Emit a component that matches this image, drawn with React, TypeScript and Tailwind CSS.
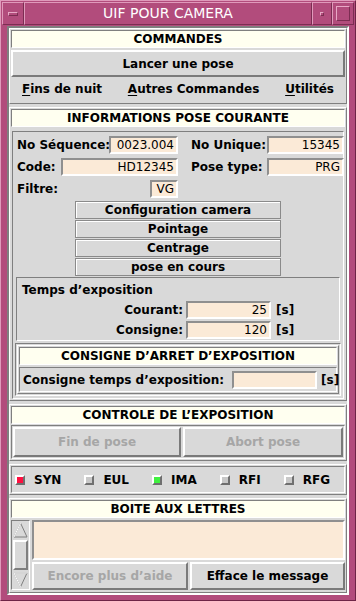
import React from "react";

const raised = "border border-t-white border-l-white border-b-[#7f7f7f] border-r-[#7f7f7f]";
const sunken = "border border-t-[#7f7f7f] border-l-[#7f7f7f] border-b-white border-r-white";

function Header({ children }: { children: React.ReactNode }) {
  return (
    <div className={`h-[18px] shrink-0 bg-[#fffff0] ${sunken} flex items-center justify-center leading-none`}>
      {children}
    </div>
  );
}

function Field({ value, className }: { value: string; className: string }) {
  return (
    <div
      className={`h-[18px] shrink-0 bg-[#fbead7] border-2 border-t-[#8f8f8f] border-l-[#8f8f8f] border-b-white border-r-white flex items-center justify-end pr-[2px] font-normal ${className}`}
    >
      {value}
    </div>
  );
}

function SmallButton({ label }: { label: string }) {
  return (
    <div className="h-[18px] w-[206px] shrink-0 border border-[#8a8a8a] shadow-[inset_1px_1px_0_#fff] flex items-center justify-center">
      {label}
    </div>
  );
}

function BigButton({ label, disabled, className }: { label: string; disabled?: boolean; className: string }) {
  return (
    <div
      className={`border-2 border-t-white border-l-white border-b-[#7a7a7a] border-r-[#7a7a7a] flex items-center justify-center ${disabled ? "text-[#a6a6a6]" : "text-black"} ${className}`}
    >
      {label}
    </div>
  );
}

function Led({ color, label }: { color?: string; label: string }) {
  return (
    <div className="flex items-center gap-[9px]">
      <div
        className={`w-[10px] h-[10px] border-2 border-t-white border-l-white border-b-[#6f6f6f] border-r-[#6f6f6f] ${color ?? "bg-[#c8c8c8]"}`}
      />
      <span>{label}</span>
    </div>
  );
}

export default function App() {
  return (
    <div
      className="w-[356px] h-[601px] bg-[#b24c7c] border border-t-[#e09abb] border-l-[#e09abb] border-b-[#6e2446] border-r-[#6e2446] flex flex-col text-[12px] font-bold text-black whitespace-nowrap"
      style={{ fontFamily: '"DejaVu Sans", "Liberation Sans", sans-serif' }}
    >
      {/* title bar */}
      <div className="h-[23px] mx-[1px] mt-[1px] flex">
        <div className="w-[22px] border border-t-[#e09abb] border-l-[#e09abb] border-b-[#7c2d52] border-r-[#7c2d52] flex items-center justify-center">
          <div className="w-[10px] h-[4px] border border-t-[#e8a8c6] border-l-[#e8a8c6] border-b-[#7c2d52] border-r-[#7c2d52]" />
        </div>
        <div className="flex-1 border border-t-[#e09abb] border-l-[#e09abb] border-b-[#7c2d52] border-r-[#7c2d52] flex items-center justify-center text-white text-[14px] font-normal">
          UIF POUR CAMERA
        </div>
        <div className="w-[20px] border border-t-[#e09abb] border-l-[#e09abb] border-b-[#7c2d52] border-r-[#7c2d52] flex items-center justify-center">
          <div className="w-[4px] h-[4px] border border-t-[#e8a8c6] border-l-[#e8a8c6] border-b-[#7c2d52] border-r-[#7c2d52]" />
        </div>
        <div className="w-[22px] border border-t-[#e09abb] border-l-[#e09abb] border-b-[#7c2d52] border-r-[#7c2d52] flex items-center justify-center">
          <div className="w-[14px] h-[15px] border border-t-[#e8a8c6] border-l-[#e8a8c6] border-b-[#7c2d52] border-r-[#7c2d52]" />
        </div>
      </div>

      {/* client area */}
      <div className="flex-1 min-h-0 mx-[6px] mb-[5px] mt-[1px] bg-[#d9d9d9] border-2 border-t-[#7f7f7f] border-l-[#7f7f7f] border-b-white border-r-white flex flex-col gap-[3px]">
        {/* COMMANDES */}
        <div className={`${raised} h-[76px] shrink-0 flex flex-col p-[1px]`}>
          <Header>COMMANDES</Header>
          <div className="mt-[2px] h-[27px] shrink-0 border-2 border-t-white border-l-white border-b-[#7a7a7a] border-r-[#7a7a7a] flex items-center justify-center">
            Lancer une pose
          </div>
          <div className="flex-1 flex items-center justify-between px-[11px] pb-[2px]">
            <span><span className="underline underline-offset-2">F</span>ins de nuit</span>
            <span><span className="underline underline-offset-2">A</span>utres Commandes</span>
            <span><span className="underline underline-offset-2">U</span>tilités</span>
          </div>
        </div>

        {/* INFORMATIONS */}
        <div className={`${raised} h-[294px] shrink-0 flex flex-col p-[1px]`}>
          <Header>INFORMATIONS POSE COURANTE</Header>
          <div className={`mt-[4px] mx-[1px] flex-1 ${sunken} flex flex-col p-[2px]`}>
            <div className="flex flex-col gap-[4px] pt-[2px] pl-[2px]">
              <div className="flex items-center">
                <span className="w-[92px] shrink-0">No Séquence:</span>
                <Field value="0023.004" className="w-[69px]" />
                <span className="w-[76px] ml-[13px] shrink-0">No Unique:</span>
                <Field value="15345" className="w-[77px]" />
              </div>
              <div className="flex items-center">
                <span className="w-[44px] shrink-0">Code:</span>
                <Field value="HD12345" className="w-[117px]" />
                <span className="w-[76px] ml-[13px] shrink-0">Pose type:</span>
                <Field value="PRG" className="w-[77px]" />
              </div>
              <div className="flex items-center">
                <span className="w-[133px] shrink-0">Filtre:</span>
                <Field value="VG" className="w-[28px]" />
              </div>
            </div>
            <div className="flex flex-col items-center gap-[1px] mt-[3px]">
              <SmallButton label="Configuration camera" />
              <SmallButton label="Pointage" />
              <SmallButton label="Centrage" />
              <SmallButton label="pose en cours" />
            </div>
            <div className={`mt-[1px] mx-[1px] h-[64px] shrink-0 ${sunken} px-[5px] pt-[2px]`}>
              <div className="leading-[20px]">Temps d’exposition</div>
              <div className="flex items-center mt-[1px]">
                <span className="w-[164px] text-right pr-[3px]">Courant:</span>
                <Field value="25" className="w-[85px]" />
                <span className="ml-[5px]">[s]</span>
              </div>
              <div className="flex items-center mt-[2px]">
                <span className="w-[164px] text-right pr-[3px]">Consigne:</span>
                <Field value="120" className="w-[85px]" />
                <span className="ml-[5px]">[s]</span>
              </div>
            </div>
            <div className={`mt-[2px] flex-1 ${sunken} p-[1px] flex flex-col`}>
              <div className={`${raised} flex-1 flex flex-col p-[1px]`}>
                <Header>CONSIGNE D’ARRET D’EXPOSITION</Header>
                <div className={`mt-[2px] flex-1 ${sunken} flex items-center pl-[3px]`}>
                  <span className="w-[209px] shrink-0">Consigne temps d’exposition:</span>
                  <Field value="" className="w-[85px]" />
                  <span className="ml-[4px]">[s]</span>
                </div>
              </div>
            </div>
          </div>
        </div>

        {/* CONTROLE */}
        <div className={`${raised} h-[57px] shrink-0 flex flex-col p-[1px]`}>
          <Header>CONTROLE DE L’EXPOSITION</Header>
          <div className={`mt-[1px] flex-1 ${sunken} flex gap-[2px] p-[1px]`}>
            <BigButton label="Fin de pose" disabled className="w-[168px]" />
            <BigButton label="Abort pose" disabled className="flex-1" />
          </div>
        </div>

        {/* LEDS */}
        <div className={`${raised} h-[31px] shrink-0 p-[1px] flex`}>
          <div className={`${sunken} flex-1 flex items-center justify-between pl-[3px] pr-[14px]`}>
            <Led label="SYN" color="bg-[#ff1040]" />
            <Led label="EUL" />
            <Led label="IMA" color="bg-[#40f040]" />
            <Led label="RFI" />
            <Led label="RFG" />
          </div>
        </div>

        {/* BOITE */}
        <div className={`${raised} flex-1 min-h-0 flex flex-col p-[1px]`}>
          <Header>BOITE AUX LETTRES</Header>
          <div className="mt-[2px] flex-1 flex gap-[2px] pb-[1px]">
            <div className={`w-[19px] ${sunken} flex flex-col items-stretch p-[1px]`}>
              <svg width="15" height="16" viewBox="0 0 15 16">
                <polygon points="7.5,1 14,15 1,15" fill="#d9d9d9" stroke="#7f7f7f" strokeWidth="1" />
                <polyline points="1,15 7.5,1" fill="none" stroke="#fff" strokeWidth="1" />
              </svg>
              <div className={`flex-1 my-[2px] ${raised} border-2`} />
              <svg width="15" height="16" viewBox="0 0 15 16">
                <polygon points="1,1 14,1 7.5,15" fill="#d9d9d9" stroke="#7f7f7f" strokeWidth="1" />
                <polyline points="1,1 14,1" fill="none" stroke="#fff" strokeWidth="1" />
                <polyline points="1,1 7.5,15" fill="none" stroke="#fff" strokeWidth="1" />
              </svg>
            </div>
            <div className="flex-1 flex flex-col gap-[2px]">
              <div className="flex-1 bg-[#fbead7] border-2 border-t-[#8f8f8f] border-l-[#8f8f8f] border-b-white border-r-white" />
              <div className="h-[28px] flex gap-[2px]">
                <BigButton label="Encore plus d’aide" disabled className="w-[156px]" />
                <BigButton label="Efface le message" className="flex-1" />
              </div>
            </div>
          </div>
        </div>
      </div>
    </div>
  );
}
